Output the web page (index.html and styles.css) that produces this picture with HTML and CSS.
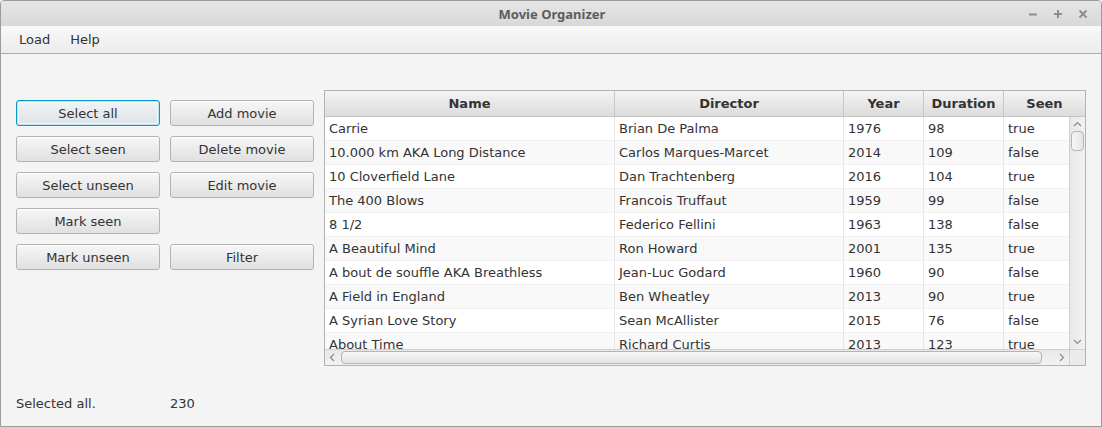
FILE: index.html
```html
<!DOCTYPE html>
<html>
<head>
<meta charset="utf-8">
<link rel="stylesheet" href="styles.css">
</head>
<body>
<div class="window">
  <div class="titlebar">
    <span class="title">Movie Organizer</span>
    <div class="controls">
      <svg width="10" height="10" viewBox="0 0 10 10"><path d="M1 5.5h8" stroke="#8d8d8d" stroke-width="2"/></svg>
      <svg width="10" height="10" viewBox="0 0 10 10"><path d="M1 5h8M5 1v8" stroke="#8d8d8d" stroke-width="2"/></svg>
      <svg width="10" height="10" viewBox="0 0 10 10"><path d="M1.5 1.5l7 7M8.5 1.5l-7 7" stroke="#8d8d8d" stroke-width="2"/></svg>
    </div>
  </div>
  <div class="menubar">
    <span class="menu">Load</span>
    <span class="menu">Help</span>
  </div>
  <div class="content">
    <div class="main">
      <div class="buttons">
        <button class="btn focused">Select all</button>
        <button class="btn">Add movie</button>
        <button class="btn">Select seen</button>
        <button class="btn">Delete movie</button>
        <button class="btn">Select unseen</button>
        <button class="btn">Edit movie</button>
        <button class="btn">Mark seen</button>
        <span></span>
        <button class="btn">Mark unseen</button>
        <button class="btn">Filter</button>
      </div>
      <div class="table">
        <div class="thead">
          <div class="th c1">Name</div>
          <div class="th c2">Director</div>
          <div class="th c3">Year</div>
          <div class="th c4">Duration</div>
          <div class="th c5">Seen</div>
        </div>
        <div class="tbody">
          <div class="tr"><div class="td c1">Carrie</div><div class="td c2">Brian De Palma</div><div class="td c3">1976</div><div class="td c4">98</div><div class="td c5">true</div></div>
          <div class="tr"><div class="td c1">10.000 km AKA Long Distance</div><div class="td c2">Carlos Marques-Marcet</div><div class="td c3">2014</div><div class="td c4">109</div><div class="td c5">false</div></div>
          <div class="tr"><div class="td c1">10 Cloverfield Lane</div><div class="td c2">Dan Trachtenberg</div><div class="td c3">2016</div><div class="td c4">104</div><div class="td c5">true</div></div>
          <div class="tr"><div class="td c1">The 400 Blows</div><div class="td c2">Francois Truffaut</div><div class="td c3">1959</div><div class="td c4">99</div><div class="td c5">false</div></div>
          <div class="tr"><div class="td c1">8 1/2</div><div class="td c2">Federico Fellini</div><div class="td c3">1963</div><div class="td c4">138</div><div class="td c5">false</div></div>
          <div class="tr"><div class="td c1">A Beautiful Mind</div><div class="td c2">Ron Howard</div><div class="td c3">2001</div><div class="td c4">135</div><div class="td c5">true</div></div>
          <div class="tr"><div class="td c1">A bout de souffle AKA Breathless</div><div class="td c2">Jean-Luc Godard</div><div class="td c3">1960</div><div class="td c4">90</div><div class="td c5">false</div></div>
          <div class="tr"><div class="td c1">A Field in England</div><div class="td c2">Ben Wheatley</div><div class="td c3">2013</div><div class="td c4">90</div><div class="td c5">true</div></div>
          <div class="tr"><div class="td c1">A Syrian Love Story</div><div class="td c2">Sean McAllister</div><div class="td c3">2015</div><div class="td c4">76</div><div class="td c5">false</div></div>
          <div class="tr"><div class="td c1">About Time</div><div class="td c2">Richard Curtis</div><div class="td c3">2013</div><div class="td c4">123</div><div class="td c5">true</div></div>
        </div>
        <div class="vscroll">
          <svg class="arrow" width="9" height="6" viewBox="0 0 9 6"><path d="M1 5l3.5-3.5L8 5" fill="none" stroke="#8a8a8a" stroke-width="1.2"/></svg>
          <div class="vtrack"><div class="vthumb"></div></div>
          <svg class="arrow" width="9" height="6" viewBox="0 0 9 6"><path d="M1 1l3.5 3.5L8 1" fill="none" stroke="#8a8a8a" stroke-width="1.2"/></svg>
        </div>
        <div class="hscroll">
          <svg class="arrow" width="6" height="9" viewBox="0 0 6 9"><path d="M5 1L1.5 4.5 5 8" fill="none" stroke="#8a8a8a" stroke-width="1.2"/></svg>
          <div class="htrack"><div class="hthumb"></div></div>
          <svg class="arrow" width="6" height="9" viewBox="0 0 6 9"><path d="M1 1l3.5 3.5L1 8" fill="none" stroke="#8a8a8a" stroke-width="1.2"/></svg>
        </div>
        <div class="corner"></div>
      </div>
    </div>
    <div class="status">
      <span class="status-text">Selected all.</span>
      <span class="status-count">230</span>
    </div>
  </div>
</div>
</body>
</html>
```

FILE: styles.css
```css
* { box-sizing: border-box; }
html, body { margin: 0; padding: 0; }
body {
  width: 1102px;
  height: 427px;
  overflow: hidden;
  background: #f4f4f4;
  font-family: "DejaVu Sans", sans-serif;
  font-size: 13px;
  color: #333333;
}
.window {
  width: 1102px;
  height: 427px;
  border: 1px solid #9b9b9b;
  border-radius: 4px 4px 0 0;
  background: #f4f4f4;
  display: flex;
  flex-direction: column;
  overflow: hidden;
}
.titlebar {
  height: 25px;
  flex: none;
  background: linear-gradient(#e6e6e6, #d8d8d8);
  display: flex;
  align-items: center;
  justify-content: center;
  position: relative;
}
.title {
  font-family: "Noto Sans", sans-serif;
  font-weight: bold;
  font-size: 13px;
  color: #5c5c5c;
  margin-left: 2px;
}
.controls {
  position: absolute;
  right: 13px;
  top: 8px;
  display: flex;
  gap: 15px;
}
.controls svg { display: block; }
.menubar {
  height: 28px;
  flex: none;
  background: linear-gradient(#f8f8f8, #ececec);
  border-bottom: 1px solid #a9a9a9;
  display: flex;
  align-items: center;
  padding-left: 8px;
}
.menu {
  padding: 0 10px;
  color: #333;
}
.content {
  flex: 1;
  padding: 36px 15px 0;
}
.main {
  display: flex;
  gap: 10px;
}
.buttons {
  padding-top: 10px;
  display: grid;
  grid-template-columns: 144px 144px;
  grid-auto-rows: 26px;
  gap: 10px;
  align-content: start;
}
.btn {
  font-family: "DejaVu Sans", sans-serif;
  font-size: 13px;
  color: #333;
  border: 1px solid #b3b3b3;
  border-radius: 3px;
  background: linear-gradient(#f7f7f7, #e0e0e0);
  box-shadow: inset 0 1px 0 #ffffff;
  padding: 0;
  height: 26px;
}
.btn.focused {
  border-color: #0a9ad0;
  box-shadow: inset 0 0 0 1px #b9e1f1, inset 0 0 0 2px #f6f6f6;
  background: linear-gradient(#f2f5f7, #dde2e6);
}
.table {
  display: grid;
  grid-template-columns: 744px 16px;
  grid-template-rows: 26px 232px 16px;
  border: 1px solid #b2b2b2;
  background: #fff;
}
.thead {
  grid-column: 1 / 3;
  display: flex;
  background: linear-gradient(#f4f4f4, #dcdcdc);
  border-bottom: 1px solid #c4c4c4;
}
.th {
  font-weight: bold;
  text-align: center;
  line-height: 25px;
  border-right: 1px solid #c6c6c6;
  color: #333;
}
.c1 { width: 290px; }
.c2 { width: 229px; }
.c3 { width: 80px; }
.c4 { width: 80px; }
.c5 { width: 65px; }
.th.c5 { flex: 1; border-right: none; }
.tbody {
  overflow: hidden;
  grid-column: 1;
  grid-row: 2;
}
.tr {
  display: flex;
  height: 24px;
  background: #ffffff;
  border-bottom: 1px solid #f0f0f0;
}
.tr:nth-child(even) { background: #f9f9f9; }
.td {
  padding-left: 4px;
  line-height: 23px;
  border-right: 1px solid #e6e6e6;
  white-space: nowrap;
  overflow: hidden;
}
.td.c5 { border-right: none; }
.vscroll {
  grid-column: 2;
  grid-row: 2;
  background: linear-gradient(90deg, #e8e8e8, #f2f2f2);
  border-left: 1px solid #d0d0d0;
  display: flex;
  flex-direction: column;
  align-items: center;
  padding: 4px 0;
}
.vscroll .arrow { flex: none; display: block; }
.vtrack {
  flex: 1;
  width: 100%;
  padding: 4px 1px 0 1px;
}
.vthumb {
  height: 20px;
  border: 1px solid #b4b4b4;
  border-radius: 4px;
  background: linear-gradient(90deg, #f7f7f7, #e4e4e4);
}
.hscroll {
  grid-column: 1;
  grid-row: 3;
  background: linear-gradient(#e8e8e8, #f2f2f2);
  border-top: 1px solid #d0d0d0;
  display: flex;
  align-items: center;
  padding: 0 4px;
}
.hscroll .arrow { flex: none; display: block; }
.htrack {
  flex: 1;
  height: 100%;
  padding: 1px 17px 1px 6px;
}
.hthumb {
  height: 100%;
  border: 1px solid #b4b4b4;
  border-radius: 4px;
  background: linear-gradient(#f7f7f7, #e4e4e4);
}
.corner {
  grid-column: 2;
  grid-row: 3;
  background: #ebebeb;
  border-top: 1px solid #d0d0d0;
  border-left: 1px solid #d0d0d0;
}
.status {
  display: flex;
  margin-top: 30px;
  line-height: 16px;
}
.status-text { width: 154px; }
```
